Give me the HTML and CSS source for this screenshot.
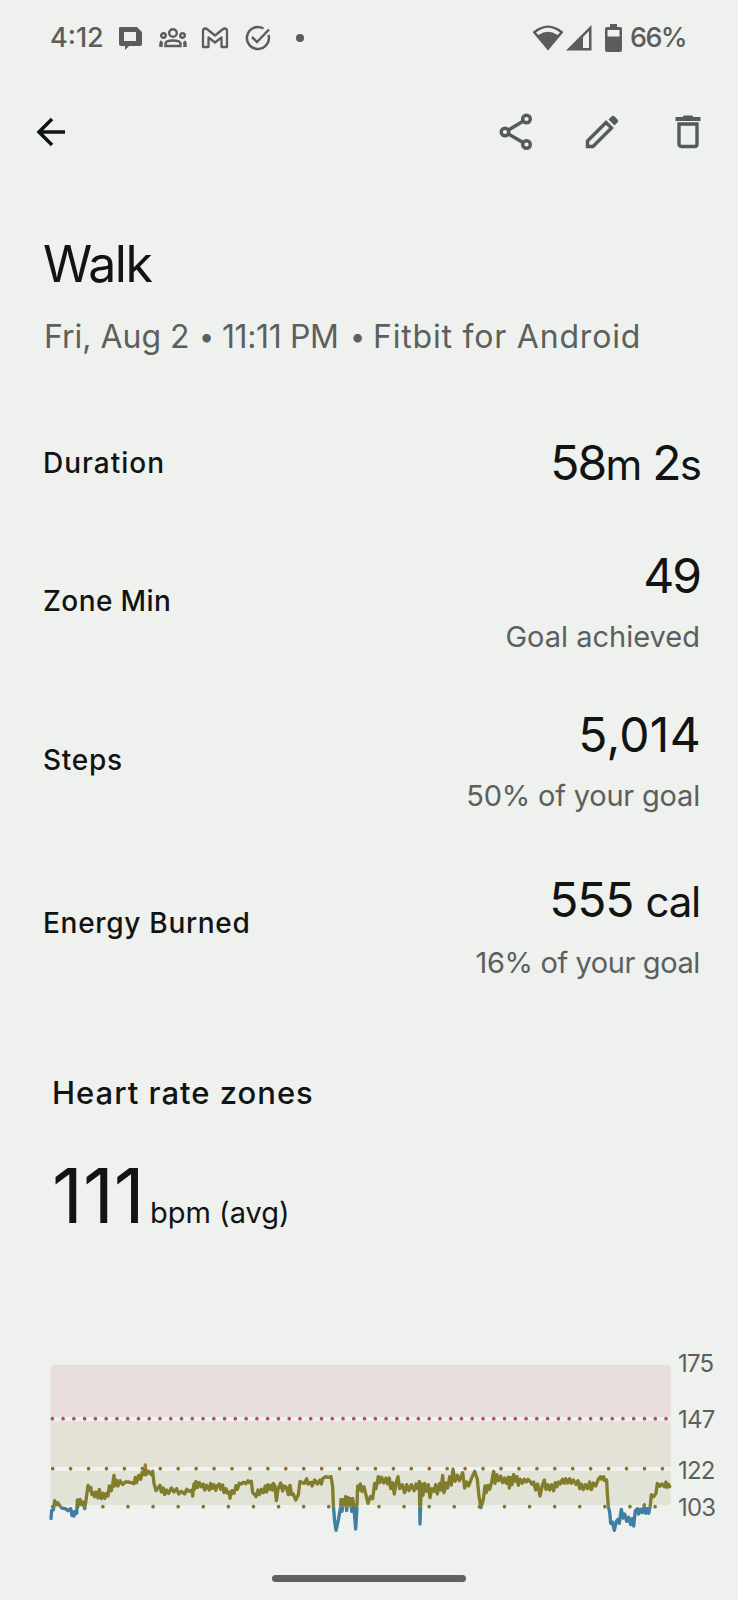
FILE: index.html
```html
<!DOCTYPE html>
<html lang="en">
<head>
  <meta charset="UTF-8">
  <meta name="viewport" content="width=device-width, initial-scale=1.0">
  <title>Walk</title>
  <link rel="stylesheet" href="styles.css">
</head>
<body>

  <!-- Status bar -->
  <div class="status">
    <span class="time">4:12</span>
    <svg class="s-chat" width="24" height="26" viewBox="0 0 24 26"><path fill="currentColor" fill-rule="evenodd" d="M2 1H19L24 6V18Q24 20 22 20H11L7 24V20H3Q1 20 1 18V2Q1 1 2 1ZM6 6V15H18V6Z"/></svg>
    <svg class="s-group" width="30" height="20" viewBox="0 0 30 20" fill="none" stroke="currentColor" stroke-width="2.400"><circle cx="15" cy="5" r="3.800"/><circle cx="5.500" cy="7.500" r="2.300"/><circle cx="24.500" cy="7.500" r="2.300"/><path d="M7.500 18V15.500Q8 12.500 15 12.500T22.500 15.500V18Z"/><path stroke-width="3.500" d="M3 19V16Q3 14.500 4 13.500M27 19V16Q27 14.500 26 13.500"/></svg>
    <svg class="s-mail" width="28" height="22" viewBox="0 0 28 22" fill="none" stroke="currentColor" stroke-width="2.300" stroke-linejoin="round"><path d="M2 20V4Q2 1.500 4.500 1.500Q5.500 1.500 6.500 2.500L14 8.500L21.500 2.500Q22.500 1.500 23.500 1.500Q26 1.500 26 4V20H20.500V10.500L14 15.500L7.500 10.500V20Z"/></svg>
    <svg class="s-check" width="26" height="26" viewBox="0 0 26 26" fill="none" stroke="currentColor" stroke-width="2.500"><path d="M18.500 3.500A11 11 0 1 0 23.500 10"/><path d="M7 12L12 17L24 4.500"/></svg>
    <span class="dot"></span>
    <svg class="s-wifi" width="32" height="26" viewBox="0 0 32 26"><path fill="currentColor" fill-rule="evenodd" d="M0.500 7Q16-6 31.500 7L16 25.500ZM4 7.500L6.500 10Q16 3.500 25.500 10L28 7.500Q16-2 4 7.500Z"/></svg>
    <svg class="s-signal" width="26" height="26" viewBox="0 0 26 26"><path fill="currentColor" fill-rule="evenodd" d="M0 25.500L25.500 0V25.500ZM17 12V23H23V6Z"/></svg>
    <svg class="s-battery" width="17" height="28" viewBox="0 0 17 28"><path fill="currentColor" fill-rule="evenodd" d="M5 0H12V3H15Q17 3 17 5V26Q17 28 15 28H2Q0 28 0 26V5Q0 3 2 3H5ZM2.500 6V12.500H14.500V6Z"/></svg>
    <span class="percent">66%</span>
  </div>

  <!-- Top bar -->
  <div class="toolbar">
    <svg class="back" width="30" height="30" viewBox="0 0 30 30" fill="none" stroke="currentColor" stroke-width="3.500"><path d="M29 15H3M16 2L3 15L16 28"/></svg>
    <svg class="share" width="34" height="38" viewBox="0 0 34 38" fill="none" stroke="currentColor" stroke-width="3.400"><circle cx="6" cy="19" r="3.800"/><circle cx="27.500" cy="6" r="3.800"/><circle cx="27.500" cy="31.500" r="3.800"/><path d="M9.500 17L24 8.200M9.500 21L24 29.500"/></svg>
    <svg class="edit" width="34" height="34" viewBox="0 0 34 34"><path fill="none" stroke="currentColor" stroke-width="3.400" d="M2.500 31.500V26L21 7.500L26.500 13L8 31.500Z"/><path fill="currentColor" d="M23.500 4.500L26.500 1.500Q28 0 29.500 1.500L32.500 4.500Q34 6 32.500 7.500L29.500 10.500Z"/></svg>
    <svg class="trash" width="26" height="34" viewBox="0 0 26 34"><path fill="currentColor" d="M0.500 2H7.500L9 0.500H17L18.500 2H25.500V6H0.500Z"/><path fill="none" stroke="currentColor" stroke-width="3.400" d="M4 9H22V29Q22 31.500 19.500 31.500H6.500Q4 31.500 4 29Z"/></svg>
  </div>

  <h1>Walk</h1>
  <p class="subtitle">
    <span class="date">Fri, Aug 2</span>
    <span class="bullet">•</span>
    <span class="clock">11:11 PM</span>
    <span class="bullet">•</span>
    <span class="app">Fitbit for Android</span>
  </p>

  <div class="stats">
    <div class="row duration">
      <span class="label">Duration</span>
      <div class="value">58<span class="unit">m</span> 2<span class="unit">s</span></div>
    </div>
    <div class="row zone">
      <span class="label">Zone Min</span>
      <div>
        <div class="value">49</div>
        <div class="goal">Goal achieved</div>
      </div>
    </div>
    <div class="row steps">
      <span class="label">Steps</span>
      <div>
        <div class="value">5,014</div>
        <div class="goal">50% of your goal</div>
      </div>
    </div>
    <div class="row energy">
      <span class="label">Energy Burned</span>
      <div>
        <div class="value">555 <span class="unit">cal</span></div>
        <div class="goal">16% of your goal</div>
      </div>
    </div>
  </div>

  <h2>Heart rate zones</h2>
  <div class="bpm"><span class="avg">111</span><span class="bpm-unit">bpm (avg)</span></div>

  <div class="chart">
    <svg width="640" height="190" viewBox="0 0 1920 570">
      <defs>
        <clipPath id="peak"><rect x="0" y="0" width="1920" height="352"/></clipPath>
        <clipPath id="moderate"><rect x="0" y="352" width="1920" height="118"/></clipPath>
        <clipPath id="light"><rect x="0" y="470" width="1920" height="100"/></clipPath>
        <polyline id="rate" points="33,506 35,482 40,480 44,452 48,465 53,458 58,466 66,474 76,476 84,482 92,476 96,497 100,486 102,498 106,484 110,490 112,450 116,464 120,448 125,464 129,456 134,476 138,450 144,406 148,420 152,412 156,434 160,428 164,440 168,426 174,444 178,418 184,446 190,430 194,445 200,430 204,438 208,408 214,422 218,402 222,376 224,408 229,390 234,408 240,392 248,404 256,396 264,396 274,398 282,401 286,382 290,398 296,376 302,388 306,368 312,374 316,345 318,374 326,364 334,374 338,364 342,400 348,422 354,414 360,406 364,426 370,414 374,434 380,420 386,430 394,414 402,426 410,416 416,432 424,424 434,432 440,418 448,424 456,420 458,438 462,402 465,416 468,394 473,412 478,398 484,410 490,402 494,420 500,406 508,420 512,400 516,415 522,404 527,421 532,407 538,402 542,418 548,405 552,428 558,416 563,430 568,426 570,445 576,422 582,430 588,407 592,418 598,400 604,402 610,397 618,401 624,392 628,398 634,394 638,428 644,434 648,440 654,420 658,434 664,418 670,428 676,408 680,426 684,404 690,418 694,406 698,420 700,400 705,408 709,452 714,418 722,399 728,423 733,408 739,412 745,434 750,406 755,434 760,432 767,450 775,434 780,394 786,398 793,400 800,386 804,402 812,397 816,408 824,390 832,402 840,390 844,402 848,386 857,380 864,382 873,380 878,410 880,466 884,514 888,541 895,510 902,470 903,448 906,484 910,449 914,466 917,440 920,482 924,442 928,466 932,446 935,484 938,445 941,468 944,500 947,537 950,490 953,408 957,420 961,402 966,424 972,410 978,436 984,460 991,440 998,446 1004,400 1008,416 1015,380 1019,398 1025,382 1031,399 1038,384 1043,402 1048,384 1052,416 1057,398 1063,432 1068,398 1074,380 1079,416 1087,404 1094,428 1100,404 1107,422 1114,404 1122,422 1128,402 1132,416 1138,394 1140,522 1142,458 1145,402 1149,436 1154,400 1159,424 1165,404 1170,443 1176,416 1182,424 1187,404 1192,432 1199,400 1203,420 1208,376 1212,428 1218,399 1223,414 1229,380 1234,405 1239,357 1245,394 1252,376 1258,392 1268,368 1274,414 1280,396 1286,408 1295,384 1304,364 1312,388 1317,440 1323,473 1330,448 1335,408 1339,428 1344,406 1349,418 1355,396 1361,364 1365,400 1370,374 1376,392 1382,378 1388,398 1394,384 1399,400 1405,382 1408,414 1413,382 1416,404 1421,374 1427,394 1431,380 1435,406 1441,388 1447,400 1453,388 1459,396 1464,388 1470,394 1476,403 1481,396 1487,420 1493,402 1500,438 1507,406 1513,390 1518,418 1524,404 1529,420 1535,404 1541,422 1546,398 1551,410 1556,396 1561,402 1567,388 1573,400 1577,386 1583,399 1589,386 1594,400 1600,390 1608,403 1614,392 1619,416 1624,402 1630,419 1636,404 1643,416 1649,396 1654,419 1660,399 1667,408 1675,388 1681,380 1685,388 1691,380 1694,392 1700,390 1702,430 1705,470 1709,486 1712,520 1717,516 1723,541 1729,514 1734,508 1738,520 1744,478 1749,504 1754,492 1760,514 1766,502 1772,524 1777,506 1781,528 1786,482 1792,476 1796,492 1801,478 1807,488 1813,464 1817,490 1822,476 1826,490 1831,466 1834,434 1841,440 1848,430 1852,400 1859,409 1866,402 1873,410 1878,396 1881,412 1886,403 1889,410"/>
      </defs>
      <path class="band-peak" d="M32 201V56Q32 44 44 44H1880Q1892 44 1892 56V201Z"/>
      <rect class="band-vigorous" x="32" y="213" width="1860" height="138"/>
      <path class="band-moderate" d="M32 363H1892V453Q1892 465 1880 465H44Q32 465 32 453Z"/>
      <path class="gap" d="M32 207H1892M32 357H1892"/>
      <path class="dots red" d="M37 206H1880"/>
      <path class="dots orange" d="M38 356H1880"/>
      <path class="dots green" d="M38 470H1880"/>
      <g clip-path="url(#peak)"><use href="#rate" class="line vigorous"/></g>
      <g clip-path="url(#moderate)"><use href="#rate" class="line active"/></g>
      <g clip-path="url(#light)"><use href="#rate" class="line rest"/></g>
    </svg>
    <div class="scale">
      <span>175</span>
      <span>147</span>
      <span>122</span>
      <span>103</span>
    </div>
  </div>

  <div class="home"></div>

</body>
</html>
```
FILE: styles.css
```css
* {
  box-sizing: border-box;
}
body {
  margin: 0;
  height: 1600px;
  background: #eef1ee;
  color: #111412;
  font-family: Inter, Roboto, sans-serif;
  display: flex;
  flex-direction: column;
  overflow: hidden;
}
svg {
  display: block;
  flex: none;
}
.status {
  height: 75px;
  padding: 0 53px 0 50px;
  display: flex;
  align-items: center;
  color: #5b5c5b;
  font-size: 27px;
  font-weight: 500;
}
.time { width: 68px; }
.s-chat { margin-top: 2px; }
.s-group { margin-left: 16px; }
.s-mail { margin-left: 13px; }
.s-check { margin-left: 16px; }
.dot {
  width: 8px;
  height: 8px;
  margin-left: 25px;
  border-radius: 50%;
  background: #5b5c5b;
}
.s-wifi { margin-left: auto; }
.s-signal { margin-left: 2px; }
.s-battery { margin-left: 13px; }
.percent { width: 55px; margin-left: 8px; letter-spacing: -1.6px; }
.toolbar {
  height: 113px;
  padding: 0 37px 0 36px;
  display: flex;
  align-items: center;
  color: #565b57;
}
.back { color: #111412; margin-right: auto; }
.edit { margin-left: 52px; }
.trash { margin-left: 56px; }
h1 {
  margin: 44px 0 0 43px;
  font-size: 50px;
  line-height: 64px;
  font-weight: 400;
  letter-spacing: -1.5px;
}
.subtitle {
  margin: 21px 0 0 44px;
  display: flex;
  font-size: 32px;
  line-height: 40px;
  color: #5c605d;
  white-space: nowrap;
}
.date { width: 147px; }
.bullet {
  width: 31px;
  text-align: center;
  font-size: 27px;
}
.clock { width: 120px; letter-spacing: -0.4px; }
.app { letter-spacing: 0.8px; }
.stats {
  margin-top: 47px;
  padding: 0 38px 0 43px;
}
.row {
  display: flex;
  align-items: center;
  justify-content: space-between;
  text-align: right;
}
.duration { height: 118px; }
.zone { height: 158px; }
.steps { height: 160px; }
.energy { height: 166px; }
.label {
  font-size: 28px;
  font-weight: 500;
  letter-spacing: 0.7px;
}
.duration .label { letter-spacing: 1px; }
.zone .label { letter-spacing: 0.4px; }
.value {
  font-size: 48px;
  line-height: 68px;
  letter-spacing: -1px;
  position: relative;
  top: 1px;
}
.unit { font-size: 42px; }
.duration .value { letter-spacing: -1.8px; }
.zone .value { letter-spacing: -2px; }
.steps .value { letter-spacing: 0.3px; margin-right: -1px; }
.goal {
  margin-top: 4px;
  font-size: 29px;
  line-height: 48px;
  letter-spacing: -0.2px;
  color: #5c605d;
}
.zone .goal { letter-spacing: 0; }
.energy .value { padding-top: 5px; letter-spacing: -1.2px; }
.energy .goal { letter-spacing: -0.4px; }
h2 {
  margin: 67px 0 0 52px;
  font-size: 31px;
  line-height: 40px;
  font-weight: 500;
  letter-spacing: 1px;
}
.bpm {
  margin: 36px 0 0 52px;
  height: 92px;
  display: flex;
  align-items: baseline;
}
.avg {
  width: 91px;
  font-size: 76px;
  line-height: 92px;
  font-weight: 400;
  letter-spacing: 0;
}
.bpm-unit {
  margin-left: 7px;
  font-size: 29px;
}
.chart {
  margin: 109px 0 0 40px;
  height: 190px;
  display: flex;
}
.scale {
  margin-left: -2px;
  display: flex;
  flex-direction: column;
  font-size: 24px;
  line-height: 30px;
  letter-spacing: -0.8px;
  color: #5c605d;
}
.scale span:nth-child(1) { margin-top: -1px; }
.scale span:nth-child(2) { margin-top: 26px; }
.scale span:nth-child(3) { margin-top: 21px; }
.scale span:nth-child(4) { margin-top: 7px; }
.band-peak { fill: #e8dddd; }
.band-vigorous { fill: #e6e1d6; }
.band-moderate { fill: #e2e3d7; }
.gap { stroke: #f1f2f0; stroke-width: 12; }
.dots {
  fill: none;
  stroke-width: 11;
  stroke-linecap: round;
}
.red { stroke: #b25058; stroke-dasharray: 0 32.3; }
.orange { stroke: #996c2c; stroke-dasharray: 0 53.8; }
.green { stroke: #7b7c28; stroke-dasharray: 0 75.3; }
.line {
  fill: none;
  stroke-width: 10;
  stroke-linejoin: round;
  stroke-linecap: round;
}
.vigorous { stroke: #ac7438; }
.active { stroke: #827d2d; }
.rest { stroke: #407fa4; }
.home {
  width: 194px;
  height: 7px;
  margin: 35px auto 0;
  border-radius: 4px;
  background: #606160;
}
```
